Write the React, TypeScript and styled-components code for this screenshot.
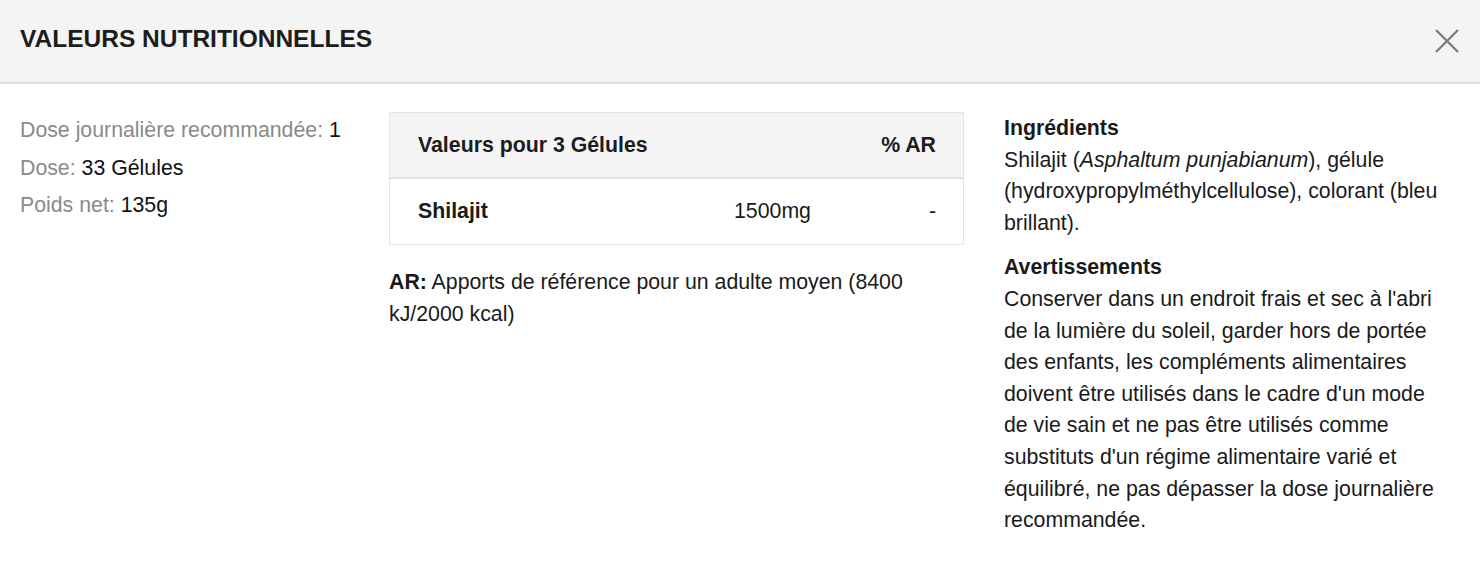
import { ReactElement } from 'react'
import styled, { createGlobalStyle } from 'styled-components'

const GlobalStyle = createGlobalStyle`
    html, body {
        margin: 0;
        padding: 0;
        background: #fff;
    }
    body {
        font-family: 'Liberation Sans', Arial, Helvetica, sans-serif;
        color: #1a1a1a;
    }
`

const Modal = styled.div`
    width: 1480px;
    min-height: 570px;
    background: #fff;
`

const Header = styled.header`
    height: 84px;
    display: flex;
    align-items: center;
    justify-content: space-between;
    padding: 0 20px 4px 20px;
    background: #f4f4f4;
    border-bottom: 2px solid #dedede;
    box-sizing: border-box;

    h2 {
        margin: 0;
        font-size: 24.5px;
        font-weight: 700;
        color: #1c1c1c;
    }
`

const CloseButton = styled.button`
    width: 26px;
    height: 26px;
    padding: 0;
    margin-top: 4px;
    border: none;
    background: transparent;
    cursor: pointer;
    display: flex;
    align-items: center;
    justify-content: center;
`

const Body = styled.div`
    display: grid;
    grid-template-columns: 329px 575px 1fr;
    column-gap: 40px;
    padding: 28px 20px 20px 20px;
    font-size: 21.3px;
`

const Specs = styled.ul`
    list-style: none;
    margin: 0;
    padding: 0;

    li {
        line-height: 37.5px;
        height: 37.5px;
        color: #111;
        white-space: nowrap;
    }
    span {
        color: #8a8a8a;
    }
`

const Table = styled.table`
    width: 100%;
    border-collapse: collapse;
    border: 1px solid #e4e4e4;

    th,
    td {
        padding: 0 27px 0 28px;
        font-size: 21.3px;
        text-align: left;
    }
    th {
        height: 64px;
        font-weight: 700;
        color: #1c1c1c;
    }
    td {
        height: 65px;
    }
    thead tr {
        background: #f4f4f4;
        border-bottom: 2px solid #e2e2e2;
    }
`

const Cell = styled.td<{ $align?: 'left' | 'right'; $bold?: boolean }>`
    && {
        text-align: ${(p) => p.$align || 'left'};
        font-weight: ${(p) => (p.$bold ? 700 : 400)};
    }
`

const HeadCell = styled.th<{ $align?: 'left' | 'right' }>`
    && {
        text-align: ${(p) => p.$align || 'left'};
    }
`

const Note = styled.p`
    margin: 22px 0 0 0;
    line-height: 31.5px;
    padding-right: 40px;

    b {
        font-weight: 700;
    }
`

const Info = styled.div`
    max-width: 442px;
    padding-top: 1px;
    line-height: 31.6px;

    h3 {
        margin: 0;
        font-size: 21.3px;
        font-weight: 700;
        line-height: 31.6px;
    }
    p {
        margin: 0 0 13px 0;
    }
`

function CloseIcon(): ReactElement {
    return (
        <svg width='26' height='26' viewBox='0 0 26 26'>
            <path
                d='M2 2 L24 24 M24 2 L2 24'
                stroke='#7a7a7a'
                strokeWidth='2.2'
                fill='none'
            />
        </svg>
    )
}

export default function App(): ReactElement {
    return (
        <Modal>
            <GlobalStyle />
            <Header>
                <h2>VALEURS NUTRITIONNELLES</h2>
                <CloseButton aria-label='Fermer'>
                    <CloseIcon />
                </CloseButton>
            </Header>
            <Body>
                <Specs>
                    <li>
                        <span>Dose journalière recommandée:</span> 1
                    </li>
                    <li>
                        <span>Dose:</span> 33 Gélules
                    </li>
                    <li>
                        <span>Poids net:</span> 135g
                    </li>
                </Specs>
                <div>
                    <Table>
                        <thead>
                            <tr>
                                <HeadCell colSpan={2}>Valeurs pour 3 Gélules</HeadCell>
                                <HeadCell $align='right'>% AR</HeadCell>
                            </tr>
                        </thead>
                        <tbody>
                            <tr>
                                <Cell $bold style={{ width: '261px' }}>
                                    Shilajit
                                </Cell>
                                <Cell>1500mg</Cell>
                                <Cell $align='right'>-</Cell>
                            </tr>
                        </tbody>
                    </Table>
                    <Note>
                        <b>AR:</b> Apports de référence pour un adulte moyen (8400
                        kJ/2000 kcal)
                    </Note>
                </div>
                <Info>
                    <h3>Ingrédients</h3>
                    <p>
                        Shilajit (<i>Asphaltum punjabianum</i>), gélule
                        (hydroxypropylméthylcellulose), colorant (bleu brillant).
                    </p>
                    <h3>Avertissements</h3>
                    <p>
                        Conserver dans un endroit frais et sec à l'abri de la lumière
                        du soleil, garder hors de portée des enfants, les compléments
                        alimentaires doivent être utilisés dans le cadre d'un mode de
                        vie sain et ne pas être utilisés comme substituts d'un régime
                        alimentaire varié et équilibré, ne pas dépasser la dose
                        journalière recommandée.
                    </p>
                </Info>
            </Body>
        </Modal>
    )
}
